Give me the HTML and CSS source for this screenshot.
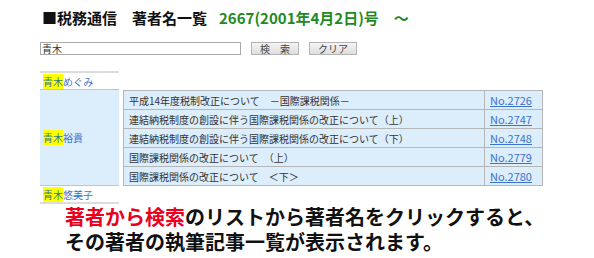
FILE: index.html
```html
<!DOCTYPE html>
<html lang="ja">
<head>
  <meta charset="UTF-8">
  <title>著者名一覧</title>
  <link rel="stylesheet" href="styles.css">
</head>
<body>
  <div class="page">
    <h1 class="title">■税務通信　著者名一覧<span class="issue">2667(2001年4月2日)号　～</span></h1>

    <form class="search">
      <input class="search-input" type="text" value="青木">
      <button class="btn" type="button">検　索</button>
      <button class="btn" type="button">クリア</button>
    </form>

    <div class="authors">
      <div class="author">
        <div class="name first"><a href="#"><mark>青木</mark>めぐみ</a></div>
      </div>

      <div class="author">
        <div class="name open"><a href="#"><mark>青木</mark>裕貴</a></div>
        <table class="articles">
          <tr><td class="subject">平成14年度税制改正について　－国際課税関係－</td><td class="no"><a href="#">No.2726</a></td></tr>
          <tr><td class="subject">連結納税制度の創設に伴う国際課税関係の改正について（上）</td><td class="no"><a href="#">No.2747</a></td></tr>
          <tr><td class="subject">連結納税制度の創設に伴う国際課税関係の改正について（下）</td><td class="no"><a href="#">No.2748</a></td></tr>
          <tr><td class="subject">国際課税関係の改正について　（上）</td><td class="no"><a href="#">No.2779</a></td></tr>
          <tr><td class="subject">国際課税関係の改正について　＜下＞</td><td class="no"><a href="#">No.2780</a></td></tr>
        </table>
      </div>

      <div class="author">
        <div class="name last"><a href="#"><mark>青木</mark>悠美子</a></div>
      </div>
    </div>

    <p class="note"><span class="red">著者から検索</span>のリストから著者名をクリックすると、<br>その著者の執筆記事一覧が表示されます。</p>
  </div>
</body>
</html>
```

FILE: styles.css
```css
body {
  margin: 0;
  font-family: "Noto Sans CJK JP", "Noto Sans", sans-serif;
  color: #111;
  background: #fff;
}
.page {
  padding: 8px 0 0 40px;
}
.title {
  margin: 0 0 0 2px;
  font-size: 15px;
  line-height: 20px;
  font-weight: bold;
}
.issue {
  margin-left: 12px;
  color: #1f8a1f;
}
.search {
  display: flex;
  gap: 10px;
  margin: 14px 0 0 0;
  height: 13px;
}
.search-input {
  width: 201px;
  height: 13px;
  box-sizing: border-box;
  margin: 0;
  padding: 0 1px;
  border: 1px solid #a9a9a9;
  font-family: inherit;
  font-size: 10px;
  line-height: 11px;
  color: #333;
}
.btn {
  width: 48px;
  height: 13px;
  box-sizing: border-box;
  margin: 0;
  padding: 0;
  border: 1px solid #b4b4b4;
  background: linear-gradient(#f4f4f4, #dedede);
  font-family: inherit;
  font-size: 10px;
  line-height: 11px;
  color: #444;
}
.authors {
  margin-top: 16px;
}
.author {
  display: flex;
  align-items: stretch;
}
.name {
  width: 79px;
  display: flex;
  align-items: center;
  padding-left: 3px;
  box-sizing: border-box;
  border-bottom: 1px solid #c4c4c4;
  font-size: 10px;
  height: 18px;
}
.name.first {
  border-top: 2px solid #dcdcdc;
  height: 19px;
}
.name.open {
  background: #dcedfc;
  height: auto;
}
.name.last {
  border-bottom: 2px solid #dcdcdc;
}
.name a {
  color: #3a72cc;
  text-decoration: none;
}
mark {
  background: #ffff00;
  color: #2f7a86;
}
.articles {
  margin-left: 4px;
  width: 420px;
  border-collapse: collapse;
  font-size: 10px;
}
.articles td {
  height: 18px;
  padding: 0 5px;
  background: #dcedfc;
  border: 1px solid #b6b6b6;
  color: #333;
}
.articles .no {
  width: 47px;
  font-size: 11px;
}
.no a {
  color: #3a72cc;
}
.note {
  margin: 0 0 0 25px;
  font-size: 20px;
  line-height: 25px;
  font-weight: bold;
  color: #111;
}
.red {
  color: #e8001c;
}
```
